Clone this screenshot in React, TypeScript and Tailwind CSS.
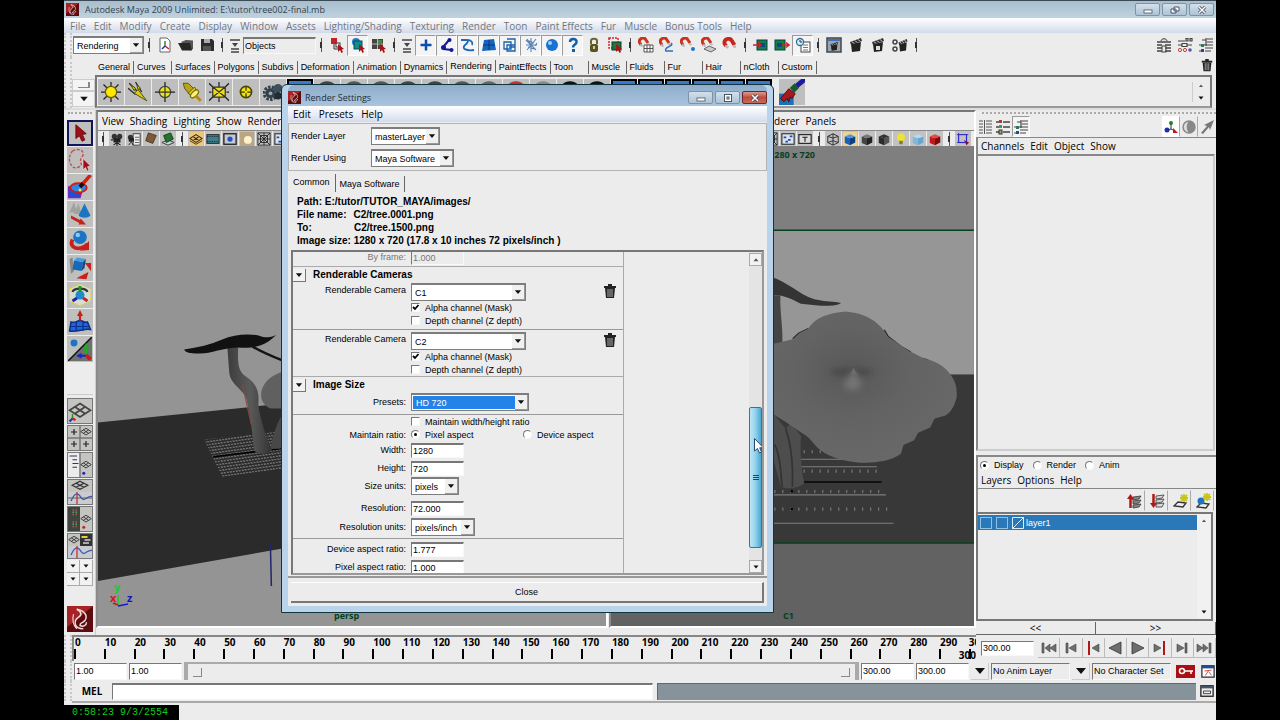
import type { ReactNode } from "react";
import clsx from "clsx";
import { twMerge } from "tailwind-merge";

/* ---------- icons, all on a 16x16 grid ---------- */

const magnet = (
  <>
    <path d="M3 8 L1.500 5.500 A3.500 3.500 0 0 1 8 3 L10 6" fill="none" stroke="#c8341c" strokeWidth="3" />
    <path d="M2 7.500 l2.500 2 M9 6.500 l2.500 1.500" stroke="#b8b8b8" strokeWidth="2" />
  </>
);

const clapper = (
  <>
    <path d="M3 7 L13 5 L12 14 L4 15 Z" fill="#222" />
    <path d="M2 5 L13 1 L14 4 L3 8 Z" fill="#333" />
    <path d="M4 4.500 l2 2 M7 3.500 l2 2 M10 2.300 l2 2" stroke="#ddd" strokeWidth="1" />
  </>
);

const cursorRed = <path d="M9 7 L9 15 L11 13 L12.500 16 L14 15 L12.700 12.500 L15 12 Z" fill="#a8121a" />;

const cube = (front: string, side: string, top: string) => (
  <>
    <path d="M2 5 L8 7 L8 15 L2 12.500 Z" fill={front} />
    <path d="M8 7 L14 5 L14 12 L8 15 Z" fill={side} />
    <path d="M2 5 L8 2.500 L14 5 L8 7 Z" fill={top} />
  </>
);

const diamonds = (color: string) => (
  <path
    d="M8 3 L15 7.500 L8 12 L1 7.500 Z M4.500 5.200 L11.500 9.800 M11.500 5.200 L4.500 9.800"
    fill="none"
    stroke={color}
    strokeWidth="1.200"
  />
);

const icons: Record<string, ReactNode> = {
  newScene: (
    <>
      <path d="M3 1 h7 l3 3 v11 h-10 z" fill="#fff" stroke="#666" />
      <path d="M8 9 v-5" stroke="#1a9a1a" strokeWidth="1.500" />
      <path d="M8 9 l-3 3" stroke="#1a2fd0" strokeWidth="1.500" />
      <path d="M8 9 l4 3" stroke="#d01a1a" strokeWidth="1.500" />
    </>
  ),
  open: (
    <>
      <path d="M3 5 L8 3 L15 3.500 V12 L12 13.500 Z" fill="#555" />
      <path d="M0 6 H12 L14 13.500 H4 Z" fill="#262626" />
    </>
  ),
  save: (
    <>
      <path d="M2 2 H13 L15 4 V14 H2 Z" fill="#2c2c2c" />
      <rect x="5" y="2" width="6" height="4" fill="#aaa" />
      <rect x="4" y="9" width="8" height="5" fill="#555" />
    </>
  ),
  filter: (
    <>
      <path d="M3 3 H13 M4 12 H12 M4 15 H12" stroke="#444" strokeWidth="1.300" />
      <path d="M5 6 H11 L8 10 Z" fill="#444" />
    </>
  ),
  hierarchy: (
    <>
      <rect x="2" y="1" width="6" height="6" fill="#c71f28" />
      <path d="M5 7 V12 H12 M8 8 H11" stroke="#333" fill="none" />
      <rect x="7" y="6" width="4" height="4" fill="#fff" stroke="#333" />
      {cursorRed}
    </>
  ),
  object: (
    <>
      <circle cx="6" cy="5" r="4" fill="#2578c8" />
      <rect x="4" y="4" width="8" height="8" fill="#0e8f86" stroke="#054c66" />
      {cursorRed}
    </>
  ),
  component: (
    <>
      <rect x="1" y="2" width="11" height="10" fill="#444" />
      <path d="M6.500 2 V12 M1 7 H12" stroke="#bbb" />
      <rect x="7" y="3" width="4" height="4" fill="#3d8f3d" />
      {cursorRed}
    </>
  ),
  plus: <path d="M8 2.500 V13.500 M2.500 8 H13.500" stroke="#0a4fae" strokeWidth="2.500" />,
  joint: (
    <>
      <path d="M10 3 L5 9 M4 12 L13 13" fill="none" stroke="#16169a" strokeWidth="2" />
      <circle cx="10.500" cy="3" r="2" fill="#16169a" />
      <circle cx="4.500" cy="10.500" r="2.500" fill="#16169a" />
      <circle cx="12.500" cy="13" r="2" fill="#16169a" />
    </>
  ),
  curve: <path d="M1 3 H6 C9 3 8 6 5 8 C1 12 7 14 14 13 M7 3 C12 3 13 6 12 8" fill="none" stroke="#1c68b8" strokeWidth="1.800" />,
  surface: (
    <>
      <path d="M3 3 L13 2 L15 13 L1 14 Z" fill="#1565c0" />
      <path d="M8 3 V13 M2 8 H14" stroke="#0a3870" />
    </>
  ),
  deform: (
    <path d="M2 5 H9 V12 H2 Z M5 8 H13 V14 H5 Z M5 2 H13 V10 H7" fill="none" stroke="#1a62ac" strokeWidth="1.300" />
  ),
  particles: (
    <path d="M3 3 L13 13 M13 2 L4 13 M8 1 V15 M3 8 H14 M4 2 L7 6 M12 9 L14 6 M6 4 L11 6 M5 10 L11 12" stroke="#3f6fa8" strokeWidth="1.100" opacity=".85" />
  ),
  sphere: (
    <>
      <circle cx="8" cy="8" r="6" fill="#1673d1" />
      <circle cx="6" cy="6" r="2" fill="#9fd0ff" />
    </>
  ),
  question: (
    <>
      <path d="M5 5 C5 1 12 1 11.500 5 C11.500 8 8 7 8 10.500" fill="none" stroke="#0d5fa6" strokeWidth="2.500" />
      <rect x="7" y="12" width="3" height="3" fill="#0d5fa6" />
    </>
  ),
  lock: (
    <>
      <path d="M5 7 V4 C5 1 11 1 11 4 V7" fill="none" stroke="#6b6437" strokeWidth="2" />
      <rect x="4" y="7" width="8" height="8" rx="2" fill="#5a5320" />
      <rect x="7" y="9" width="2" height="3" fill="#d8cf8a" />
    </>
  ),
  highlight: (
    <>
      <rect x="2" y="1" width="9" height="10" fill="none" stroke="#d8202c" strokeWidth="1.500" strokeDasharray="2 1" />
      <rect x="5" y="5" width="9" height="8" fill="#1a7a3c" stroke="#043a2a" />
      {cursorRed}
    </>
  ),
  magnetGrid: (
    <>
      {magnet}
      <path d="M6 8 H15 V15 H6 Z M9 8 V15 M12 8 V15 M6 11.500 H15" fill="#fff" stroke="#555" />
    </>
  ),
  magnetCurve: (
    <>
      {magnet}
      <path d="M12 6 C16 9 4 10 7 14 L14 14" fill="none" stroke="#2b6fc0" strokeWidth="1.500" />
    </>
  ),
  magnetPoint: (
    <>
      {magnet}
      <circle cx="13" cy="12" r="2" fill="#2176cc" />
    </>
  ),
  magnetPlane: (
    <>
      {magnet}
      <path d="M3 12 L8 9 L15 12 L10 15 Z" fill="#ccc" stroke="#666" />
    </>
  ),
  magnetLive: (
    <>
      <path d="M4 9 L2.500 6.500 A4 4 0 0 1 10 4 L12.500 8" fill="none" stroke="#c8251a" strokeWidth="3.800" />
      <path d="M3 9 l3.500 1.500 M11 9 l3 1" stroke="#bbb" strokeWidth="2.500" />
    </>
  ),
  input: (
    <>
      <rect x="4" y="3" width="10" height="10" fill="#16803c" stroke="#0a3d5a" />
      <rect x="7" y="6" width="5" height="4" fill="#0c4a7d" />
      <path d="M0 8 H7 M5 5.500 L8 8 L5 10.500" stroke="#d32020" fill="none" strokeWidth="1.500" />
    </>
  ),
  output: (
    <>
      <rect x="1" y="3" width="10" height="10" fill="#16803c" stroke="#0a3d5a" />
      <rect x="3" y="6" width="5" height="4" fill="#0c4a7d" />
      <path d="M8 8 H15 M12 5.500 L15 8 L12 10.500" stroke="#d32020" fill="none" strokeWidth="1.500" />
    </>
  ),
  history: (
    <>
      <rect x="6" y="5" width="9" height="10" fill="#fff" stroke="#444" />
      <path d="M8 8 H13 M8 10.500 H13 M8 13 H13" stroke="#777" />
      <circle cx="5" cy="5" r="3.500" fill="#d8ecf8" stroke="#2b6f9c" strokeWidth="1.300" />
      <path d="M5 3 V5 H7" stroke="#234" fill="none" />
    </>
  ),
  renderView: (
    <>
      <rect x="1" y="1" width="14" height="14" fill="#9aa6b4" stroke="#444" strokeWidth="1.500" />
      <rect x="2" y="2" width="12" height="2" fill="#3c74b8" />
      <g transform="translate(3 4) scale(.65)">{clapper}</g>
    </>
  ),
  clapper,
  ipr: (
    <>
      {clapper}
      <path d="M6 9 h4 v4 h-4 z" fill="#ddd" />
    </>
  ),
  renderSettings: (
    <>
      <circle cx="3" cy="5" r="2" fill="none" stroke="#444" strokeWidth="1.500" />
      <circle cx="3" cy="12" r="2" fill="none" stroke="#444" strokeWidth="1.500" />
      <g transform="translate(5 1) scale(.75 .9)">{clapper}</g>
    </>
  ),
  attr: (
    <>
      <path d="M1 5 H15 M1 8 H6 M9 8 H15 M1 11 H6 M9 11 H15 M1 14 H6 M9 14 H15" stroke="#444" strokeWidth="1.300" />
      <path d="M5 4 C5 1 11 1 11 4" fill="#ddd" stroke="#444" />
      <rect x="6" y="9" width="4" height="6" fill="none" stroke="#444" />
    </>
  ),
  toolSettings: (
    <>
      <path d="M1 4 H8 M1 8 H5 M9 1.500 H11 V4 H9 Z M13 1.500 H15 V4 H13 Z M5 6.500 H10 V9.500 H5 Z M10 8 H15" stroke="#444" fill="none" strokeWidth="1.200" />
      <circle cx="3" cy="13" r="1.600" fill="none" stroke="#b44" />
      <circle cx="8" cy="13" r="1.600" fill="none" stroke="#b44" />
      <circle cx="13" cy="13" r="1.800" fill="#55a" />
    </>
  ),
  channelBox: (
    <>
      <path d="M8 1 V9 M4 3 H8 M9 2 H15 M9 5 H15 M1 8 H15 M7 11 H15 M1 14 H4 M7 14 H13" stroke="#444" strokeWidth="1.200" fill="none" />
      <rect x="3" y="7" width="3" height="3" fill="#2a7a5a" />
      <rect x="3" y="12" width="3" height="3" fill="#2a4a80" />
    </>
  ),
  listRows: (
    <path d="M2 2 H6 M9 2 H15 M2 5 H6 M9 5 H15 M2 8 H6 M9 8 H15 M2 11 H6 M9 11 H15 M2 14 H6 M9 14 H15 M7.500 1 V15" stroke="#555" fill="none" />
  ),
  layersRows: (
    <>
      <path d="M1 3 H4 M8 3 H15 M1 8 H4 M8 8 H15 M1 13 H4 M8 13 H15" stroke="#444" strokeWidth="1.300" />
      <rect x="4" y="1" width="3" height="3" fill="#b33" />
      <rect x="4" y="6" width="3" height="3" fill="#397" />
      <rect x="4" y="11" width="3" height="4" fill="#aa4" stroke="#333" />
    </>
  ),
  trash: (
    <>
      <path d="M3 5 H13 L12 15 H4 Z" fill="#222" />
      <path d="M6 6 V14 M8 6 V14 M10 6 V14" stroke="#bbb" strokeWidth=".9" />
      <path d="M2 4 H14 M6 2 H10" stroke="#222" strokeWidth="2" />
    </>
  ),
  ambient: (
    <>
      <path d="M8 0 V16 M0 8 H16 M2 2 L14 14 M14 2 L2 14" stroke="#222" />
      <circle cx="8" cy="8" r="4.500" fill="#ffe600" stroke="#665c00" />
    </>
  ),
  directional: (
    <>
      <path d="M1 1 L8 8 M6 0 L11 8 M0 5 L6 10" stroke="#222" />
      <path d="M2 2 L6 5 L5 7 Z M7 2 L10 5 L8 6 Z M8 6 L15 15 L5 9 Z" fill="#d9cf10" stroke="#444000" strokeWidth=".7" />
    </>
  ),
  point: (
    <>
      <path d="M8 0 V16 M0 8 H16" stroke="#222" />
      <circle cx="8" cy="8" r="4.500" fill="#ece21a" stroke="#444" />
      <path d="M8 3 V13 M3 8 H13" stroke="#333" />
    </>
  ),
  spot: (
    <>
      <path d="M1 1 L5 1 L10 6 L6 10 L2 5 Z" fill="#b8a41c" stroke="#554a00" strokeWidth=".7" />
      <path d="M5 9 L10 4 L12 8 L9 12 Z" fill="#e6cf1c" stroke="#554a00" strokeWidth=".7" />
      <ellipse cx="10" cy="9.500" rx="4" ry="2" transform="rotate(-45 10 9.500)" fill="#fff27a" stroke="#7a6b00" />
      <path d="M11 11 L15 15" stroke="#b8860b" strokeWidth="2.200" />
    </>
  ),
  area: (
    <>
      <path d="M0 1 L3 4 M16 1 L13 4 M0 15 L3 12 M16 15 L13 12 M8 0 V4 M8 12 V16 M0 8 H2 M14 8 H16" stroke="#222" />
      <path d="M3 4 H13 V12 H3 Z M3 4 L13 12 M13 4 L3 12" fill="#f0e010" stroke="#333" />
    </>
  ),
  volume: (
    <>
      <circle cx="8" cy="8" r="4.500" fill="#f2e400" stroke="#4a4400" strokeWidth="1.300" />
      <path d="M8 4 V12 M4 8 H12" stroke="#333" strokeDasharray="3 2" />
    </>
  ),
  gears: (
    <>
      <circle cx="6" cy="9" r="5" fill="none" stroke="#34424c" strokeWidth="2.500" strokeDasharray="2 1" />
      <circle cx="6" cy="9" r="4" fill="#34424c" />
      <circle cx="12" cy="5" r="3.500" fill="#3b4f5c" />
      <circle cx="12" cy="11" r="3" fill="#222c33" />
      <circle cx="6" cy="9" r="1.500" fill="#9ab" />
    </>
  ),
  brush: (
    <>
      <rect x="0" y="9" width="9" height="7" fill="#1f6fb5" />
      <path d="M16 0 L10 5" stroke="#1d1a9c" strokeWidth="3" />
      <path d="M11 4 L8 7" stroke="#1c5a2e" strokeWidth="4" />
      <path d="M6 6 L10 9 L8 12 L7 11 L6 14 L5 12 L3 14 L1 12 Z" fill="#a81820" stroke="#400" strokeWidth=".5" />
    </>
  ),
  select: <path d="M5 2 L5 12 L7.500 10 L9.500 14 L11.500 13 L9.700 9 L12.500 8.500 Z" fill="#a30d18" stroke="#5c0007" strokeWidth=".6" />,
  lasso: (
    <>
      <path d="M3 2 C6 0 11 1 10 5 C8 7 8 9 9 11 C7 14 3 14 2 11 C0 8 1 4 3 2 Z" fill="none" stroke="#cc4a50" strokeWidth=".9" strokeDasharray="2 1" />
      <path d="M10 7 V14.500 L11.700 13 L12.700 15.500 L14 14.800 L13 12.500 L15 12 Z" fill="#a30d18" stroke="#eee" strokeWidth=".4" />
    </>
  ),
  paintSelect: (
    <>
      <path d="M0 8 H10 L8 15 H0 Z" fill="#1e4fd0" stroke="#8822bb" />
      <ellipse cx="7" cy="8.500" rx="5.500" ry="3" fill="#2f86e0" stroke="#d61818" strokeWidth="1.200" />
      <path d="M8 8 L15 0" stroke="#cf2013" strokeWidth="2.300" />
      <path d="M8 8 L10 5.500" stroke="#111" strokeWidth="2.500" />
      <circle cx="8" cy="10" r="1" fill="#ffe040" />
    </>
  ),
  move: (
    <>
      <path d="M1 7 L4 0 L6 7 Z M4 8 L7 1 L9 8 Z" fill="#a0a29e" />
      <path d="M7 9 L11 1 L15 9 C13 11 9 11 7 9 Z" fill="#1b74c4" />
      <path d="M2 9 L8 12 L8.500 11 L12 15 L7 15 L7.500 14 L2 11 Z" fill="#c9221c" />
    </>
  ),
  rotate: (
    <>
      <path d="M3 7 C0 13 8 15 13 10" fill="none" stroke="#c8201c" strokeWidth="2.500" />
      <path d="M8 14.500 L14 14 L14 8 Z" fill="#c8201c" />
      <circle cx="8" cy="5.500" r="4.500" fill="#1b74c4" />
      <circle cx="6.500" cy="4" r="1.500" fill="#8cc6f5" />
    </>
  ),
  scale: (
    <>
      <path d="M1 2 L3 1 L4 10 L2 12 Z" fill="#888" />
      <path d="M4 3 L10 4 L9 10 L3 9 Z" fill="#1668b8" />
      <path d="M4 3 L6 1 L12 2 L10 4 Z" fill="#4c9ae0" />
      <path d="M10 4 L12 2 L11 8 L9 10 Z" fill="#0f4a88" />
      <path d="M12 5 L15 9 L15 5 Z M7 14.500 L13 11.500 L12 15 Z" fill="#d11d1d" stroke="#d11d1d" strokeWidth=".8" />
    </>
  ),
  manipulator: (
    <>
      <path d="M1 4 L8 1 L15 4 V12 L8 15 L1 12 Z" fill="#d8dcd8" stroke="#e6dc20" strokeDasharray="1 2" />
      <path d="M3 6 C4 3 12 3 13 6" fill="none" stroke="#333" strokeWidth="1.500" />
      <circle cx="8" cy="8" r="3" fill="#1f8bc8" />
      <path d="M8 2 V6" stroke="#1a9a1a" strokeWidth="2" />
      <path d="M6 10 L3 12" stroke="#22a" strokeWidth="2" />
      <path d="M10 10 L13 12" stroke="#c22" strokeWidth="2" />
    </>
  ),
  soft: (
    <>
      <path d="M2 8 C5 9 6 7 8 7 C10 7 11 9 13 8 L15 13 C11 12 6 15 1 14 Z" fill="#1f66d6" stroke="#0a2f8c" />
      <path d="M5.500 8 V14 M10 8 V14 M1.500 11 H14" stroke="#0a2f8c" strokeWidth=".8" />
      <path d="M8 7 V3" stroke="#c8201c" strokeWidth="1.500" />
      <path d="M6 4 L8 0 L10 4 Z" fill="#c8201c" />
    </>
  ),
  lastTool: (
    <>
      <path d="M16 0 V16 H0 Z" fill="#6f716e" />
      <path d="M0 16 L16 0" stroke="#111" strokeWidth="1" />
      <circle cx="4" cy="4" r="2.300" fill="#1d74c6" />
      <path d="M12 12 V7" stroke="#18b018" strokeWidth="1.500" />
      <path d="M10 8 L12 4 L14 8 Z" fill="#18b018" />
      <path d="M12 12.500 H8" stroke="#1626c8" strokeWidth="1.500" />
      <path d="M9 10.500 V14.500 L5.500 12.500 Z" fill="#1626c8" />
      <path d="M12 12 L15 15" stroke="#d01818" strokeWidth="2.500" />
    </>
  ),
  persp: (
    <>
      {diamonds("#444")}
      <path d="M3 13 V10" stroke="#1a9a1a" />
      <path d="M3 13 L1 15" stroke="#1a3ad0" strokeWidth="1.500" />
      <path d="M3 13 L5 14" stroke="#d01a1a" strokeWidth="1.500" />
    </>
  ),
  fourView: (
    <>
      <path d="M8 0 V16 M0 8 H16" stroke="#777" />
      <path d="M4 2 V6 M2 4 H6 M4 10 V14 M2 12 H6 M12 10 V14 M10 12 H14" stroke="#222" strokeWidth=".8" />
      <g transform="translate(8 0) scale(.5)">{diamonds("#333")}</g>
    </>
  ),
  outliner: (
    <>
      <rect x="0" y="0" width="8" height="16" fill="#ececec" />
      <path d="M1 2 H6 M3 4.500 H6 M3 7 H7 M3 9.500 H6" stroke="#336" strokeWidth=".8" />
      <path d="M8 0 V16" stroke="#777" />
      <g transform="translate(8 4) scale(.5)">{diamonds("#333")}</g>
      <circle cx="10.500" cy="13.500" r="1" fill="#22c" />
    </>
  ),
  graph: (
    <>
      <g transform="translate(2 -1) scale(.75 .6)">{diamonds("#333")}</g>
      <rect x="0" y="8" width="16" height="8" fill="#c9cdd2" />
      <path d="M2 14 C5 7 7 9 9 12 C11 15 13 10 16 11" fill="none" stroke="#3a5cb0" strokeWidth=".9" />
      <path d="M6 8 V16" stroke="#d02020" strokeWidth=".8" />
      <path d="M0 12 H16" stroke="#555" strokeWidth=".6" />
    </>
  ),
  hypershade: (
    <>
      <rect x="0" y="0" width="8" height="16" fill="#3e4440" />
      <path d="M3 2 H7 M3 5 H7 M3 10 H7 M3 13 H7" stroke="#b25a4a" strokeDasharray="1 1" />
      <path d="M3 3.500 H7 M3 11.500 H7" stroke="#4fae5c" strokeDasharray="1 1" />
      <g transform="translate(8 4) scale(.5)">{diamonds("#333")}</g>
      <circle cx="10.500" cy="13.500" r="1" fill="#c22" />
    </>
  ),
  perspGraph: (
    <>
      <g transform="translate(0 0) scale(.5)">{diamonds("#333")}</g>
      <rect x="8" y="0" width="8" height="8" fill="#333" />
      <path d="M9 2 H13" stroke="#e0d040" strokeWidth="1.300" />
      <path d="M11 4 H15 M10 6 H14" stroke="#aaa" strokeWidth="1.300" />
      <rect x="0" y="8" width="16" height="8" fill="#c9cdd2" />
      <path d="M2 14 C5 7 7 9 9 12 C11 15 13 10 16 11" fill="none" stroke="#3a5cb0" strokeWidth=".9" />
      <path d="M6 8 V16" stroke="#d02020" strokeWidth=".8" />
    </>
  ),
  logo: (
    <>
      <rect width="16" height="16" fill="#5d0b0e" />
      <path d="M0 0 H16 L0 13 Z" fill="#a82326" />
      <path d="M10 14 C4 14 4 9 7 7 C10 5 8 3 6 2 C11 3 13 6 11 9 C9 11 8 10 8 12 C10 13 12 12 12 10" fill="none" stroke="#f0dcdc" strokeWidth=".9" />
      <path d="M4 5 C3 9 4 12 6 14" fill="none" stroke="#f0dcdc" strokeWidth=".7" />
    </>
  ),
  camera: (
    <>
      <circle cx="5" cy="5" r="3" fill="#333" />
      <circle cx="11" cy="5" r="3" fill="#333" />
      <rect x="4" y="7" width="8" height="5" fill="#222" />
      <path d="M8 12 V16 M8 12 L4 15 M8 12 L12 15 M1 9 H4" stroke="#222" strokeWidth="1.300" />
    </>
  ),
  cameraAttr: (
    <>
      <rect x="7" y="2" width="8" height="13" fill="#eee" stroke="#333" />
      <path d="M9 6 H14 M9 9 H14 M9 12 H14" stroke="#555" />
      <circle cx="4" cy="6" r="3" fill="#333" />
      <rect x="2" y="7" width="6" height="4" fill="#222" />
      <path d="M5 11 L2 15 M5 11 L7 15" stroke="#222" />
    </>
  ),
  bookmark: <path d="M5 1 L14 4 L10 13 L2 10 Z" fill="#7b5a3c" stroke="#4b3420" />,
  imagePlane: (
    <>
      <path d="M1 12 L8 9 L15 12 L8 15 Z" fill="#ccd" stroke="#333" />
      <path d="M3 4 L11 1 L14 8 L6 12 Z" fill="#23742b" stroke="#0d3d12" />
    </>
  ),
  grid: (
    <>
      <rect width="16" height="16" fill="#ecc77c" />
      {diamonds("#3d2c08")}
      <path d="M1 10 L8 14 L15 10" fill="none" stroke="#3d2c08" />
    </>
  ),
  filmGate: (
    <>
      <rect x="1" y="3" width="14" height="10" fill="#3f7f8c" stroke="#222" />
      <path d="M1 5 H15 M1 11 H15" stroke="#111" strokeDasharray="1 1" />
    </>
  ),
  resGate: (
    <>
      <rect x="1" y="2" width="14" height="12" fill="#c4c8d0" stroke="#222" strokeWidth="1.500" />
      <circle cx="8" cy="8" r="3" fill="#1f57c0" />
    </>
  ),
  gateMask: (
    <>
      <rect width="16" height="16" fill="#bba684" />
      <circle cx="9" cy="9" r="4.500" fill="#fff1c8" />
    </>
  ),
  fieldChart: (
    <path d="M1 1 H15 V15 H1 Z M4 4 H12 V12 H4 Z M1 1 L15 15 M15 1 L1 15 M8 1 V15 M1 8 H15" fill="none" stroke="#222" />
  ),
  safeAction: (
    <>
      <rect x="1" y="2" width="14" height="12" fill="#dde4ee" stroke="#333" strokeWidth="1.300" />
      <path d="M3 6 h3 M8 9 h3 M10 5 h3 M5 11 h3" stroke="#1d4fb4" strokeWidth="2" />
    </>
  ),
  safeTitle: (
    <>
      <rect x="1" y="3" width="14" height="10" fill="#ddd" stroke="#222" strokeWidth="1.300" />
      <path d="M5 6 H11 M8 6 V11" stroke="#222" strokeWidth="1.300" />
    </>
  ),
  wire: <path d="M2 5 L8 2 L14 5 V12 L8 15 L2 12 Z M2 5 L8 7 L14 5 M8 7 V15 M8 2 V7 M2 12 L8 10 L14 12" fill="none" stroke="#222" />,
  shaded: (
    <>
      <rect width="16" height="16" fill="#f0d492" />
      {cube("#1a5fb8", "#0e3f80", "#4f94e0")}
    </>
  ),
  flat: cube("#444", "#222", "#777"),
  checker: cube("#2c2c2c", "#555", "#333"),
  bulb: (
    <>
      <circle cx="8" cy="6" r="4.500" fill="#ece334" />
      <path d="M6 10 H10 V14 H6 Z" fill="#8a7c20" />
    </>
  ),
  xray: cube("#7fb8dc", "#6aa6cc", "#b4dcf0"),
  redCube: cube("#c0181c", "#7a0c10", "#e04a40"),
  isolate: (
    <>
      <rect x="3" y="3" width="9" height="9" fill="none" stroke="#2a2ad0" strokeWidth="1.300" />
      <path d="M1 3 H3 M12 3 H14 M3 1 V3 M12 12 V14 M1 12 H3" stroke="#2a2ad0" />
      <path d="M9 9 L15 12 L12 15 Z" fill="#8d1030" />
    </>
  ),
  axes: (
    <>
      <circle cx="8" cy="4" r="2" fill="#1a8a1a" />
      <circle cx="4" cy="11" r="2.500" fill="#1a30b0" />
      <path d="M8 5 V10 L5 11 M8 10 L12 12" stroke="#333" fill="none" />
      <path d="M10 9 L15 14 L10 14 Z" fill="#c01818" />
    </>
  ),
  halfMoon: (
    <>
      <circle cx="8" cy="8" r="6" fill="#ddd" stroke="#888" strokeWidth="1.500" />
      <path d="M8 2 A6 6 0 0 1 8 14 C5 11 5 5 8 2" fill="#888" />
    </>
  ),
  arrowUpRight: <path d="M2 14 L8 7 L5 6 L15 1 L11 11 L10 8 L4 15 Z" fill="#777" />,
  layerUp: (
    <>
      <path d="M6 4 L14 3 L12 6 L5 7 Z M6 8 L14 7 L12 10 L6 11 Z M6 12 L14 11 L12 14 L6 15 Z" fill="#888" stroke="#333" strokeWidth=".8" />
      <path d="M3.500 15 V6" stroke="#b01818" strokeWidth="2.500" />
      <path d="M0 6 L3.500 1 L7 6 Z" fill="#b01818" />
    </>
  ),
  layerDown: (
    <>
      <path d="M6 3 L14 2 L12 5 L6 6 Z M6 7 L14 6 L12 9 L6 10 Z M6 11 L14 10 L12 14 L6 14 Z" fill="#ddd" stroke="#333" strokeWidth=".8" />
      <path d="M3.500 1 V10" stroke="#b01818" strokeWidth="2.500" />
      <path d="M0 10 L3.500 15 L7 10 Z" fill="#b01818" />
    </>
  ),
  layerNew: (
    <>
      <path d="M1 13 L5 9 L13 10 L10 14 Z" fill="#eee" stroke="#333" strokeWidth="1.300" />
      <path d="M11 1 V9 M7 5 H15 M8 2 L14 8 M14 2 L8 8" stroke="#c9c41c" strokeWidth="1.800" />
    </>
  ),
  layerNewSel: (
    <>
      <path d="M1 14 L5 10 L13 11 L10 15 Z" fill="#eee" stroke="#333" strokeWidth="1.300" />
      <circle cx="5" cy="8" r="3.500" fill="#1d74c6" />
      <path d="M11 0 V8 M7 4 H15 M8 1 L14 7 M14 1 L8 7" stroke="#c9c41c" strokeWidth="1.800" />
    </>
  ),
  toStart: <path d="M1 3 H3 V13 H1 Z M9 4 V12 L4 8 Z M15 4 V12 L9 8 Z" fill="#6d706c" stroke="#444" strokeWidth=".6" />,
  stepBack: <path d="M3 3 H5 V13 H3 Z M13 4 V12 L6 8 Z" fill="#6d706c" stroke="#444" strokeWidth=".6" />,
  keyBack: (
    <>
      <path d="M14 4 V12 L7 8 Z" fill="#6d706c" stroke="#444" strokeWidth=".6" />
      <rect x="3" y="1" width="2" height="14" fill="#b01818" />
    </>
  ),
  playBack: <path d="M14 2 V14 L2 8 Z" fill="#6d706c" stroke="#333" strokeWidth=".8" />,
  play: <path d="M2 2 V14 L14 8 Z" fill="#6d706c" stroke="#333" strokeWidth=".8" />,
  keyForward: (
    <>
      <path d="M2 4 V12 L9 8 Z" fill="#6d706c" stroke="#444" strokeWidth=".6" />
      <rect x="11" y="1" width="2" height="14" fill="#b01818" />
    </>
  ),
  stepForward: <path d="M11 3 H13 V13 H11 Z M3 4 V12 L10 8 Z" fill="#6d706c" stroke="#444" strokeWidth=".6" />,
  toEnd: <path d="M13 3 H15 V13 H13 Z M7 4 V12 L12 8 Z M1 4 V12 L7 8 Z" fill="#6d706c" stroke="#444" strokeWidth=".6" />,
  down: <path d="M3 5 H13 L8 11 Z" fill="#111" />,
  up: <path d="M4 10 L8 5 L12 10 Z" fill="#555" />,
  key: (
    <>
      <circle cx="4" cy="8" r="2.500" fill="none" stroke="#fff" strokeWidth="1.500" />
      <path d="M6 8 H15 M13 8 V11" stroke="#fff" strokeWidth="1.500" />
    </>
  ),
  prefs: (
    <>
      <rect x="1" y="2" width="14" height="13" fill="#fff" stroke="#333" strokeWidth="1.500" />
      <rect x="1" y="2" width="14" height="3" fill="#1d4f8c" />
      <path d="M4 8 L12 7 M9 7 L5 13 M9 9 L12 13" stroke="#c33" />
    </>
  ),
  script: (
    <>
      <rect x="1" y="2" width="14" height="12" fill="#eee" stroke="#222" strokeWidth="1.500" />
      <rect x="1" y="2" width="14" height="3" fill="#456" />
      <path d="M4 8 H12 V11 H4 Z" fill="none" stroke="#333" />
    </>
  ),
};

function Icon({ name, className = "size-4" }: { name: string; className?: string }) {
  return (
    <svg viewBox="0 0 16 16" className={clsx("shrink-0", className)} aria-hidden>
      {icons[name]}
    </svg>
  );
}

function ToolButton({ name, pressed, className }: { name: string; pressed?: boolean; className?: string }) {
  return (
    <button
      type="button"
      aria-label={name}
      className={twMerge(
        "flex h-[21px] w-[21px] shrink-0 items-center justify-center border",
        pressed ? "border-t-[#9a9a9a] border-l-[#9a9a9a] border-r-white border-b-white bg-[#f4f4f4]" : "border-transparent",
        className,
      )}
    >
      <Icon name={name} />
    </button>
  );
}

function Divider() {
  return (
    <span className="flex w-[10px] shrink-0 flex-col items-center justify-center">
      <span className="h-1 w-px bg-[#555]" />
      <span className="h-[6px] w-[2px] bg-[#333]" />
      <span className="h-1 w-px bg-[#555]" />
    </span>
  );
}

function Handle() {
  return <div className="w-2 shrink-0 self-stretch border-x-2 border-dotted border-[#c8c8c8]" />;
}

/* ---------- form pieces ---------- */

const menuFont = "font-['Open_Sans',sans-serif] text-[10px]";
const inset = "border border-t-[#777] border-l-[#777] border-r-[#f8f8f8] border-b-[#f8f8f8]";

type ComboProps = { id: string; label?: string; value: string; className?: string; highlight?: boolean };

function Combo({ id, label, value, className, highlight }: ComboProps) {
  return (
    <span className={clsx("relative flex h-[18px] shrink-0 border border-t-2 border-[#7d7d7d] bg-white", className)}>
      <select
        id={id}
        aria-label={label}
        className={clsx(
          "h-full w-full appearance-none pl-[3px] outline-none",
          highlight ? "border border-white bg-[#2383e8] text-white" : "bg-white text-black",
        )}
      >
        <option>{value}</option>
      </select>
      <span className="pointer-events-none absolute inset-y-0 right-0 flex w-[13px] items-center justify-center border-r border-b border-[#999] bg-[#f0f0f0]">
        <Icon name="down" className="size-[10px]" />
      </span>
    </span>
  );
}

function Check({ label, checked }: { label: string; checked?: boolean }) {
  return (
    <label className="flex h-[13px] items-center gap-[5px]">
      <span className="grid place-items-center">
        <input
          type="checkbox"
          defaultChecked={checked}
          className={clsx("peer col-start-1 row-start-1 size-[9px] appearance-none bg-white", inset)}
        />
        <svg viewBox="0 0 9 9" className="pointer-events-none col-start-1 row-start-1 hidden size-[9px] peer-checked:block">
          <path d="M2 4 L4 6 L7.500 2" fill="none" stroke="#000" strokeWidth="1.800" />
        </svg>
      </span>
      {label}
    </label>
  );
}

function Radio({ name, label, checked, className }: { name: string; label: string; checked?: boolean; className?: string }) {
  return (
    <label className={clsx("flex h-[13px] items-center gap-[5px]", className)}>
      <span className="grid place-items-center">
        <input
          type="radio"
          name={name}
          defaultChecked={checked}
          className={clsx("peer col-start-1 row-start-1 size-[9px] appearance-none rounded-full bg-white", inset)}
        />
        <span className="pointer-events-none col-start-1 row-start-1 hidden size-[3px] rounded-full bg-black peer-checked:block" />
      </span>
      {label}
    </label>
  );
}

function Row({ id, label, children }: { id?: string; label?: string; children: ReactNode }) {
  return (
    <div className="flex h-[18px] items-center gap-[5px]">
      <label htmlFor={id} className="w-[113px] shrink-0 text-right whitespace-nowrap">
        {label}
      </label>
      {children}
    </div>
  );
}

function NumberField({ id, value, disabled }: { id: string; value: string; disabled?: boolean }) {
  return (
    <input
      id={id}
      defaultValue={value}
      disabled={disabled}
      className={clsx("h-[15px] w-[53px] border-t-2 pl-px outline-none", inset, disabled ? "bg-[#ececec] text-[#777]" : "bg-white")}
    />
  );
}

function SectionHeader({ title }: { title: string }) {
  return (
    <div className="flex h-4 items-center gap-[7px]">
      <button type="button" aria-label={title} className="flex size-[13px] items-center justify-center border-r border-b border-[#777] bg-[#f2f2f2]">
        <Icon name="down" className="size-[10px]" />
      </button>
      <h3 className="text-[10px] font-bold">{title}</h3>
    </div>
  );
}

function CameraBlock({ id, name }: { id: string; name: string }) {
  return (
    <div>
      <div className="flex items-center gap-[5px]">
        <label htmlFor={id} className="w-[113px] shrink-0 pb-[5px] text-right">
          Renderable Camera
        </label>
        <Combo id={id} value={name} className="w-[115px]" />
        <button type="button" aria-label="Remove" className="mr-[5px] ml-auto flex pb-[2px]">
          <Icon name="trash" />
        </button>
      </div>
      <div className="pl-[118px]">
        <Check label="Alpha channel (Mask)" checked />
        <Check label="Depth channel (Z depth)" />
      </div>
    </div>
  );
}

/* ---------- data ---------- */

const mainMenu = [
  "File", "Edit", "Modify", "Create", "Display", "Window", "Assets", "Lighting/Shading", "Texturing",
  "Render", "Toon", "Paint Effects", "Fur", "Muscle", "Bonus Tools", "Help",
];

const shelfTabs = [
  "General", "Curves", "Surfaces", "Polygons", "Subdivs", "Deformation", "Animation", "Dynamics", "Rendering",
  "PaintEffects", "Toon", "Muscle", "Fluids", "Fur", "Hair", "nCloth", "Custom",
];

const masks = ["plus", "joint", "curve", "surface", "deform", "particles", "sphere", "question"];
const snaps = ["magnetGrid", "magnetCurve", "magnetPoint", "magnetPlane", "magnetLive"];
const lights = ["ambient", "directional", "point", "spot", "area", "volume", "gears"];
const shelfBalls = ["#444", "#555", "#555", "#444", "#444", "#555", "#666", "#b33", "#888", "#111", "#111"];
const toolbox = ["select", "lasso", "paintSelect", "move", "rotate", "scale", "manipulator", "soft", "lastTool"];
const layouts = ["persp", "fourView", "outliner", "graph", "hypershade", "perspGraph"];
const playback = ["toStart", "stepBack", "keyBack", "playBack", "play", "keyForward", "stepForward", "toEnd"];
const ticks = Array.from({ length: 30 }, (_, i) => i * 10);

/* ---------- viewports ---------- */

const viewTools = ["camera", "cameraAttr", "bookmark", "imagePlane"];
const gateTools = ["grid", "filmGate", "resGate", "gateMask", "fieldChart", "safeAction", "safeTitle"];
const shadeTools = ["wire", "shaded", "flat", "checker", "bulb", "xray", "redCube"];

function PanelTools({ names }: { names: string[] }) {
  return (
    <>
      {names.map((name) => (
        <button key={name} type="button" aria-label={name} className="flex h-[15px] w-4 shrink-0 items-center justify-center bg-[#c2c2c2]">
          <Icon name={name} className="size-[14px]" />
        </button>
      ))}
    </>
  );
}

function Viewport({ end, className, children }: { end?: boolean; className: string; children: ReactNode }) {
  return (
    <section className={clsx("flex min-w-0 flex-col border-2 border-t-[#777] border-r-white border-b-white border-l-[#8a8a8a] bg-[#ececec]", className)}>
      <nav className={clsx("flex h-[18px] shrink-0 items-center gap-[6px] px-1", menuFont, end && "w-[229px] justify-end")}>
        {["View", "Shading", "Lighting", "Show", "Renderer", "Panels"].map((item) => (
          <a key={item} href="#">{item}</a>
        ))}
      </nav>
      <div className={clsx("flex h-4 shrink-0 items-center gap-px overflow-hidden border-t border-[#888]", end && "justify-end pr-[3px]")}>
        <Divider />
        <PanelTools names={viewTools} />
        <Divider />
        <PanelTools names={gateTools} />
        <Divider />
        <PanelTools names={shadeTools} />
        <Divider />
        <PanelTools names={["isolate"]} />
      </div>
      <div className="relative min-h-0 flex-1">{children}</div>
    </section>
  );
}

function PerspScene() {
  return (
    <svg viewBox="0 0 507 479" preserveAspectRatio="xMinYMin slice" className="absolute inset-0 h-full w-full bg-[#949494]">
      <defs>
        <linearGradient id="trunk" x1="0" x2="1">
          <stop offset="0" stopColor="#3c3c3c" />
          <stop offset=".5" stopColor="#5a5a5a" />
          <stop offset="1" stopColor="#333" />
        </linearGradient>
        <pattern id="dots" width="3" height="3" patternUnits="userSpaceOnUse" patternTransform="rotate(-8) skewX(20)">
          <rect width="2" height="1" y="1" fill="#909090" />
        </pattern>
      </defs>
      <path d="M0 276 L507 224 V345 L0 434 Z" fill="#2b2b2b" />
      <path d="M106 293 L200 283 V320 L124 330 Z" fill="url(#dots)" />
      <path d="M115 310 L200 300" stroke="#000" strokeWidth="1.500" />
      <path d="M163 245 C168 228 182 226 200 220 V262 L172 262 C164 258 162 252 163 245 Z" fill="#606060" />
      <path d="M200 258 C184 262 178 274 172 302 H182 C184 290 186 280 200 272 Z" fill="#484848" />
      <path d="M129 200 H140 C139 218 140 226 149 231 C159 238 161 246 160 258 C162 275 168 290 174 304 C168 308 160 308 156 304 C154 285 152 270 148 252 C146 244 132 238 131 226 Z" fill="url(#trunk)" />
      <path d="M144 238 L153 278" stroke="#8a4a3a" />
      <path d="M86 203 C100 201 112 198 124 193 C135 188 150 187 160 189 C168 192 174 191 178 188 C170 197 158 203 140 201 C125 201 110 208 100 207 C92 207 87 206 86 203 Z" fill="#111" />
      <path d="M154 200 C164 206 174 210 184 214" stroke="#141414" strokeWidth="2.500" fill="none" />
      <path d="M172 397 L173 439" stroke="#23236e" strokeWidth="1.500" />
      <path d="M20 458 V448" stroke="#1fc82a" strokeWidth="1.500" />
      <path d="M15 456 L20 458" stroke="#c01818" strokeWidth="1.500" />
      <path d="M20 459 L30 457" stroke="#1a1ad0" strokeWidth="1.500" />
    </svg>
  );
}

function CameraScene() {
  return (
    <svg viewBox="0 0 362 481" preserveAspectRatio="xMaxYMin slice" className="absolute inset-0 h-full w-full bg-[#626262]">
      <defs>
        <radialGradient id="leaf" cx=".45" cy=".4" r=".6">
          <stop offset="0" stopColor="#585858" />
          <stop offset=".5" stopColor="#636363" />
          <stop offset="1" stopColor="#686868" />
        </radialGradient>
        <filter id="soft" x="-50%" y="-100%" width="200%" height="300%">
          <feGaussianBlur stdDeviation="9" />
        </filter>
      </defs>
      <rect width="362" height="84" fill="#7f7f7f" />
      <rect y="84" width="362" height="144" fill="#969696" />
      <rect y="228" width="362" height="168" fill="#383838" />
      <g transform="translate(153 -37) scale(.332 .338)">
        <path d="M20 495 C70 510 100 545 150 562 C185 570 210 568 230 573 C215 585 170 582 110 575 C80 560 50 545 20 550 Z" fill="#343434" />
        <path d="M0 550 H48 C46 600 56 640 54 690 L30 705 H0 Z" fill="#454545" />
        <path d="M110 1034 H270 M110 1056 H338 M20 1139 H365 M20 1223 H388" stroke="#7d7d7d" strokeWidth="3" />
        <path d="M118 1012 H230 M118 1069 H345 M30 1129 H365 M30 1181 H385" stroke="#858585" strokeWidth="9" strokeDasharray="3 21" />
        <path d="M118 1101 H352" stroke="#050505" strokeWidth="4" />
        <path d="M20 890 L64 944 L80 926 L110 965 C106 1010 112 1070 120 1105 C100 1122 70 1122 50 1116 L20 1010 Z" fill="#4d4d4d" />
        <path d="M30 990 C50 1020 48 1080 54 1115 M64 944 C84 1000 86 1060 84 1115" stroke="#333" strokeWidth="5" fill="none" />
        <path d="M360 652 L372 672 L412 702 L440 718 M462 734 L492 741 M132 648 L103 662 L85 678 M510 916 L496 936 L460 952 L450 974 L416 990" stroke="#222" strokeWidth="4" fill="none" />
        <path
          d="M0 700 L50 688 L85 680 L105 662 L132 648 C150 625 170 605 245 598 C290 602 310 614 330 626 C350 642 362 655 370 672 L408 696 C430 715 450 720 478 736 C510 742 540 758 556 780 C572 800 579 815 578 850 C570 880 560 895 544 905 L512 914 L498 940 L462 956 L450 978 L418 992 L410 1018 C380 1040 330 1046 290 1044 C250 1042 200 1030 170 1008 C145 990 140 970 115 958 L64 924 L35 906 L0 880 Z"
          fill="url(#leaf)"
        />
        <ellipse cx="262" cy="776" rx="66" ry="10" fill="#454545" filter="url(#soft)" />
        <path d="M268 768 L292 810 C286 836 246 836 238 815 Z" fill="#747474" filter="url(#soft)" />
        <path d="M268 764 L280 786 L258 784 Z" fill="#6c6c6c" />
        <circle cx="82" cy="1128" r="4" fill="#000" />
        <circle cx="82" cy="1181" r="4" fill="#000" />
      </g>
      <path d="M0 84 H362 M0 396 H362" stroke="#04401c" strokeWidth="1.500" />
    </svg>
  );
}

/* ---------- render settings window ---------- */

function WindowButton({ kind, close }: { kind: string; close?: boolean }) {
  return (
    <button
      type="button"
      aria-label={kind}
      className={clsx(
        "flex h-[13px] w-[25px] items-center justify-center rounded-[2px] border",
        close ? "border-[#6b2a25] bg-linear-to-b from-[#d99a90] via-[#bf4a3c] to-[#c86a58]" : "border-[#7d93a6] bg-linear-to-b from-[#d3e0ea] to-[#adc3d5]",
      )}
    >
      <svg viewBox="0 0 12 8" className="h-2 w-3" aria-hidden>
        {kind === "Minimize" && <rect x="2" y="4" width="8" height="3" fill="#fff" stroke="#445566" strokeWidth=".8" />}
        {kind === "Maximize" && (
          <>
            <rect x="2.500" y=".5" width="7" height="7" fill="#fff" stroke="#445566" />
            <rect x="5" y="3" width="2" height="2" fill="none" stroke="#445566" />
          </>
        )}
        {kind === "Restore" && <path d="M5 1 H10 V5 H5 Z M2 3 H7 V7 H2 Z" fill="#fff" stroke="#445566" />}
        {kind === "Close" && (
          <>
            <path d="M3 1 L9 7 M9 1 L3 7" stroke="#445" strokeWidth="3" />
            <path d="M3 1 L9 7 M9 1 L3 7" stroke="#fff" strokeWidth="1.500" />
          </>
        )}
      </svg>
    </button>
  );
}

function RenderSettings() {
  return (
    <div className="absolute top-[84px] left-[217px] flex h-[529px] w-[493px] flex-col rounded-t-md border border-[#12343f] bg-[#b9d3ea] px-[6px] pb-[6px]">
      <header className="flex h-[21px] shrink-0 items-center gap-1 rounded-t-md bg-linear-to-b from-[#8fadcb] to-[#a9c4dd] pt-1 font-['Open_Sans',sans-serif] text-[#1d2c3a]">
        <Icon name="logo" className="size-[13px]" />
        <h2 className="flex-1">Render Settings</h2>
        <div className="flex gap-[2px]">
          <WindowButton kind="Minimize" />
          <WindowButton kind="Maximize" />
          <WindowButton kind="Close" close />
        </div>
      </header>
      <nav className={clsx("flex h-4 shrink-0 items-center gap-2 bg-linear-to-b from-white to-[#d3dcee] px-[5px]", menuFont)}>
        <a href="#">Edit</a>
        <a href="#">Presets</a>
        <a href="#">Help</a>
      </nav>

      <div className="flex min-h-0 flex-1 flex-col bg-[#ececec]">
        <div className="mt-px flex shrink-0 flex-col gap-1 border border-[#b4b4b4] py-[3px] pl-[2px]">
          <div className="flex items-center">
            <label htmlFor="layer" className="w-20">Render Layer</label>
            <Combo id="layer" value="masterLayer" className="w-[69px]" />
          </div>
          <div className="flex items-center">
            <label htmlFor="using" className="w-20">Render Using</label>
            <Combo id="using" value="Maya Software" className="w-[83px]" />
          </div>
        </div>

        <div className="mt-[3px] flex h-[18px] shrink-0" role="tablist">
          <button type="button" role="tab" className="border-r border-[#666] px-[5px] pb-[2px]">Common</button>
          <button type="button" role="tab" className="mt-[2px] border-r border-[#666] px-1">Maya Software</button>
        </div>

        <div className="shrink-0 px-[9px] pt-[3px] pb-[3px] text-[10px]/[13px] font-bold">
          <p>Path: E:/tutor/TUTOR_MAYA/images/</p>
          <p className="flex gap-[7px]"><span>File name:</span><span>C2/tree.0001.png</span></p>
          <p className="flex"><span className="w-[57px]">To:</span><span>C2/tree.1500.png</span></p>
          <p>Image size: 1280 x 720 (17.8 x 10 inches 72 pixels/inch )</p>
        </div>

        <div className="mx-[3px] flex min-h-0 flex-1 overflow-hidden border-2 border-t-[#777] border-r-[#999] border-b-[#999] border-l-[#777]">
          <div className="w-[331px] shrink-0 border-r border-[#aaa]">
            <div className="-mt-1 border-b border-[#aaa] text-[#777]">
              <Row id="byframe" label="By frame:">
                <NumberField id="byframe" value="1.000" disabled />
              </Row>
            </div>
            <SectionHeader title="Renderable Cameras" />
            <div className="mb-[2px] border-b border-[#999] pb-[2px]">
              <CameraBlock id="cam1" name="C1" />
            </div>
            <CameraBlock id="cam2" name="C2" />
            <div className="border-t border-[#aaa]">
              <SectionHeader title="Image Size" />
            </div>
            <div className="border-b border-[#999] pb-[3px]">
              <Row id="presets" label="Presets:">
                <Combo id="presets" value="HD 720" highlight className="w-[118px]" />
              </Row>
            </div>
            <div className="border-b border-[#999] pb-[2px]">
              <div className="pl-[118px]">
                <Check label="Maintain width/height ratio" />
              </div>
              <div className="flex h-[13px] items-center gap-[5px]">
                <span className="w-[113px] text-right">Maintain ratio:</span>
                <Radio name="ratio" label="Pixel aspect" checked className="w-[107px]" />
                <Radio name="ratio" label="Device aspect" />
              </div>
              <Row id="width" label="Width:"><NumberField id="width" value="1280" /></Row>
              <Row id="height" label="Height:"><NumberField id="height" value="720" /></Row>
              <Row id="units" label="Size units:"><Combo id="units" value="pixels" className="w-12" /></Row>
              <div className="mt-1 flex flex-col gap-px">
                <Row id="res" label="Resolution:"><NumberField id="res" value="72.000" /></Row>
                <Row id="resunits" label="Resolution units:"><Combo id="resunits" value="pixels/inch" className="w-16" /></Row>
              </div>
            </div>
            <div className="pt-px">
              <Row id="dar" label="Device aspect ratio:"><NumberField id="dar" value="1.777" /></Row>
              <Row id="par" label="Pixel aspect ratio:"><NumberField id="par" value="1.000" /></Row>
            </div>
          </div>

          {/* scroll bar */}
          <div className="ml-auto flex w-[13px] flex-col bg-[#e4e4e4]">
            <button type="button" aria-label="Scroll up" className="mt-px flex h-[13px] items-center justify-center border border-[#aaa] bg-[#f2f2f2]">
              <Icon name="up" className="size-[10px]" />
            </button>
            <div className="relative mt-[141px] flex h-[141px] items-center justify-center rounded-[2px] border border-[#3a7591] bg-linear-to-r from-[#bfe6f6] via-[#8fd2ee] to-[#49a6cf]">
              <span className="flex flex-col gap-px">
                <span className="h-px w-[6px] bg-[#1d4a66]" />
                <span className="h-px w-[6px] bg-[#1d4a66]" />
                <span className="h-px w-[6px] bg-[#1d4a66]" />
              </span>
              <svg viewBox="0 0 10 16" className="absolute top-[30px] left-1 h-4 w-[10px]" aria-hidden>
                <path d="M.5 .5 V13 L3.500 10.500 L5.500 15 L7.500 14 L5.700 9.800 H9.500 Z" fill="#fff" stroke="#2c4a66" />
              </svg>
            </div>
            <button type="button" aria-label="Scroll down" className="mt-auto flex h-[13px] items-center justify-center border border-[#aaa] bg-[#f2f2f2]">
              <Icon name="down" className="size-2" />
            </button>
          </div>
        </div>

        <div className="mt-px shrink-0 border-t-2 border-[#999] px-[3px] pt-1 pb-[3px]">
          <button type="button" className="h-[21px] w-full border-t border-r-2 border-b-2 border-t-white border-r-[#777] border-b-[#777]">
            Close
          </button>
        </div>
      </div>
    </div>
  );
}

/* ---------- right side panel ---------- */

function SidePanel() {
  return (
    <aside className="flex w-[240px] shrink-0 flex-col bg-[#ececec]">
      <div className="mt-[2px] ml-[6px] h-1 border-t-2 border-dotted border-[#aaa]" />
      <div className="flex h-[21px] shrink-0 items-center">
        <ToolButton name="listRows" className="w-[18px]" />
        <ToolButton name="layersRows" className="w-[18px]" />
        <ToolButton name="channelBox" className="w-[18px]" pressed />
        <div className="ml-auto flex">
          <ToolButton name="axes" className="w-[18px] border-r-[#aaa] bg-white" />
          <ToolButton name="halfMoon" className="w-[18px] border-r-[#aaa]" />
          <ToolButton name="arrowUpRight" className="w-[18px]" />
        </div>
      </div>
      <nav className={clsx("flex h-[17px] shrink-0 items-center gap-[6px] border-t border-l-2 border-[#888] px-[3px]", menuFont)}>
        <a href="#">Channels</a>
        <a href="#">Edit</a>
        <a href="#">Object</a>
        <a href="#">Show</a>
      </nav>
      <div className="mr-px flex-1 border-2 border-[#888] border-r-[#ccc] border-b-[#ccc]" />

      <div className="mt-1 border-t-2 border-l-2 border-[#888]">
        <div className="flex h-4 items-center gap-[9px] pl-[2px]">
          <Radio name="layermode" label="Display" checked />
          <Radio name="layermode" label="Render" />
          <Radio name="layermode" label="Anim" />
        </div>
        <nav className={clsx("flex h-4 items-center gap-[6px] border-b border-[#888] px-[3px] pb-px", menuFont)}>
          <a href="#">Layers</a>
          <a href="#">Options</a>
          <a href="#">Help</a>
        </nav>
        <div className="flex h-[23px] items-center justify-end gap-[2px] pr-[2px]">
          <ToolButton name="layerUp" className="border-r-[#aaa]" />
          <ToolButton name="layerDown" className="border-r-[#aaa]" />
          <ToolButton name="layerNew" className="border-r-[#aaa]" />
          <ToolButton name="layerNewSel" className="border-r-[#aaa]" />
        </div>
      </div>
      <div className="mr-[3px] flex h-[109px] shrink-0 border-2 border-[#777]">
        <ul className="flex-1 pt-px">
          <li className="flex h-[15px] items-center gap-1 bg-[#2a78b8] px-[2px] text-white">
            <span className="size-3 border border-[#8fc0e6]" />
            <span className="size-3 border border-[#8fc0e6]" />
            <span className="flex items-center gap-[2px]">
              <svg viewBox="0 0 12 12" className="size-3" aria-hidden>
                <path d="M.5 .5 H11.500 V11.500 H.5 Z M0 12 L12 0" fill="none" stroke="#d8ecfa" />
              </svg>
              layer1
            </span>
          </li>
        </ul>
        <div className="flex w-[14px] flex-col items-center justify-between bg-[#f1f1f1] py-[3px]">
          <Icon name="up" className="size-2" />
          <Icon name="down" className="size-2" />
        </div>
      </div>
      <div className={clsx("mt-px flex h-[13px] shrink-0", menuFont)}>
        <button type="button" className="flex-1 border-r border-b border-[#666] leading-none">&lt;&lt;</button>
        <button type="button" className="flex-1 border-r border-b border-[#666] leading-none">&gt;&gt;</button>
      </div>
    </aside>
  );
}

/* ---------- page ---------- */

export default function App() {
  return (
    <div className="min-h-screen bg-black px-16 font-['Liberation_Sans',sans-serif] text-[9px]/[12px] text-black">
      <div className="relative flex h-screen min-h-[720px] flex-col bg-[#ececec]">
        <header className="flex h-[18px] shrink-0 items-center gap-[6px] border-t border-[#3c4a55] bg-linear-to-b from-[#a8becd] to-[#bfd2df] px-[2px] font-['Open_Sans',sans-serif] text-[#33414d]">
          <Icon name="logo" className="size-[13px]" />
          <h1 className="flex-1">Autodesk Maya 2009 Unlimited: E:\tutor\tree002-final.mb</h1>
          <div className="flex gap-[2px]">
            <WindowButton kind="Minimize" />
            <WindowButton kind="Restore" />
            <WindowButton kind="Close" />
          </div>
        </header>
        <nav className={clsx("flex h-[15px] shrink-0 items-center gap-2 bg-linear-to-b from-white to-[#d2daea] px-[6px] text-[#707780]", menuFont)}>
          {mainMenu.map((item) => (
            <a key={item} href="#">{item}</a>
          ))}
        </nav>

        {/* status line */}
        <div className="flex h-6 shrink-0 items-center">
          <Handle />
          <Combo id="menuset" label="Menu set" value="Rendering" className="ml-px w-[71px]" />
          <Divider />
          {["newScene", "open", "save"].map((name) => <ToolButton key={name} name={name} />)}
          <Divider />
          <ToolButton name="filter" className="w-4" />
          <input aria-label="Selection mask" defaultValue="Objects" className={clsx("h-[17px] w-[73px] border-t-2 bg-[#ececec] pl-px outline-none", inset)} />
          <Divider />
          <ToolButton name="hierarchy" />
          <ToolButton name="object" pressed />
          <ToolButton name="component" />
          <Divider />
          <ToolButton name="filter" className="w-4" />
          {masks.map((name) => <ToolButton key={name} name={name} pressed />)}
          <ToolButton name="lock" />
          <ToolButton name="highlight" />
          <Divider />
          {snaps.map((name) => <ToolButton key={name} name={name} />)}
          <Divider />
          <ToolButton name="input" />
          <ToolButton name="output" />
          <ToolButton name="history" pressed />
          <Divider />
          {["renderView", "clapper", "ipr", "renderSettings"].map((name) => <ToolButton key={name} name={name} className="w-[22px]" />)}
          <Divider />
          <div className="ml-auto flex">
            <ToolButton name="attr" />
            <ToolButton name="toolSettings" />
            <ToolButton name="channelBox" />
          </div>
        </div>

        {/* shelf */}
        <div className="flex h-[51px] shrink-0">
          <Handle />
          <div className="flex w-[23px] flex-col justify-end pb-px">
            <button type="button" aria-label="Shelf tabs" className="flex h-3 items-center justify-center border border-[#ccc] bg-[#f4f4f4]">
              <span className="h-[6px] w-3 border-r-2 border-b border-[#888]" />
            </button>
            <button type="button" aria-label="Shelf menu" className="flex h-4 items-center justify-center border border-[#ccc] bg-[#f4f4f4]">
              <Icon name="down" className="size-3" />
            </button>
          </div>
          <div className="flex min-w-0 flex-1 flex-col">
            <div className="flex h-[18px] items-center pt-[2px]" role="tablist">
              {shelfTabs.map((tab) => (
                <button
                  key={tab}
                  type="button"
                  role="tab"
                  className={clsx("h-[13px] min-w-[38px] border-r border-[#666] px-[3px] text-left", tab === "Rendering" && "mb-[2px]")}
                >
                  {tab}
                </button>
              ))}
              <button type="button" aria-label="Delete" className="mr-[2px] ml-auto flex pb-1">
                <Icon name="trash" className="size-[14px]" />
              </button>
            </div>
            <div className="mr-1 flex min-h-0 flex-1 items-center gap-px border-2 border-[#777] border-b-[#999] px-px">
              {lights.map((name) => (
                <button key={name} type="button" aria-label={name} className="flex size-[26px] shrink-0 items-center justify-center bg-[#bebebe]">
                  <Icon name={name} className="size-5" />
                </button>
              ))}
              <span className="size-[26px] shrink-0 border-2 border-black bg-[#3b78c8]" />
              {shelfBalls.map((color, i) => (
                <span key={i} className="flex size-[26px] shrink-0 items-center justify-center bg-[#bebebe]">
                  <svg viewBox="0 0 20 20" className="size-6" aria-hidden>
                    <circle cx="10" cy="10" r="9" fill={color} />
                  </svg>
                </span>
              ))}
              {[0, 1, 2, 3, 4, 5].map((i) => (
                <span key={i} className="size-[26px] shrink-0 border-2 border-black bg-[#3b78c8]" />
              ))}
              <button type="button" aria-label="Paint" className="ml-1.5 flex size-[26px] shrink-0 items-center justify-center bg-[#bebebe]">
                <Icon name="brush" className="size-[26px]" />
              </button>
              <span className="mr-px ml-auto flex w-4 flex-col items-center gap-1 border-l border-[#ccc]">
                <Icon name="up" className="size-2" />
                <Icon name="down" className="size-2" />
              </span>
            </div>
          </div>
        </div>

        {/* workspace */}
        <div className="flex min-h-0 flex-1 border-t-2 border-[#ddd]">
          <div className="flex w-8 shrink-0 flex-col items-center border-r border-[#ccc]">
            <div className="mt-[2px] mb-1 h-1 w-6 border-t-2 border-dotted border-[#aaa]" />
            <div className="flex flex-col gap-px">
              {toolbox.map((name) => (
                <button
                  key={name}
                  type="button"
                  aria-label={name}
                  className={clsx("flex size-[26px] items-center justify-center bg-[#bfc0bd]", name === "select" && "border-2 border-[#14145c]")}
                >
                  <Icon name={name} className={name === "select" ? "size-[22px]" : "size-6"} />
                </button>
              ))}
            </div>
            <div className="mt-8 flex flex-col gap-px border-t border-[#ccc] pt-[3px]">
              {layouts.map((name) => (
                <button key={name} type="button" aria-label={name} className="flex size-[26px] items-center justify-center border border-[#777] bg-[#c4c5c1]">
                  <Icon name={name} className="size-6" />
                </button>
              ))}
              <div className="grid grid-cols-2">
                {[0, 1, 2, 3].map((i) => (
                  <button key={i} type="button" aria-label="Panel" className="flex h-[13px] items-center justify-center border-r border-b border-[#aaa] bg-[#f2f2f2]">
                    <Icon name="down" className="size-2" />
                  </button>
                ))}
              </div>
            </div>
            <Icon name="logo" className="mt-auto mb-[3px] size-[26px]" />
          </div>

          <div className="flex min-w-0 flex-1 gap-px pb-[7px]">
            <Viewport className="flex-[511]">
              <PerspScene />
              <b className="absolute bottom-[22px] left-3 font-['Open_Sans',sans-serif] text-[11px] text-[#d01818]">x</b>
              <b className="absolute bottom-[33px] left-4 font-['Open_Sans',sans-serif] text-[11px] text-[#1fc82a]">y</b>
              <b className="absolute bottom-[22px] left-[29px] font-['Open_Sans',sans-serif] text-[11px] text-[#1212c8]">z</b>
              <span className="absolute bottom-1 left-[236px] font-['Open_Sans',sans-serif] font-bold text-[#04401c]">persp</span>
            </Viewport>
            <Viewport end className="flex-[365]">
              <CameraScene />
              <span className="absolute top-[3px] right-[159px] font-['Open_Sans',sans-serif] font-bold text-[#04401c]">1280 x 720</span>
              <span className="absolute right-[180px] bottom-1 font-['Open_Sans',sans-serif] font-bold text-[#04401c]">C1</span>
            </Viewport>
          </div>

          <SidePanel />
        </div>

        {/* time slider */}
        <div className="flex h-[26px] shrink-0">
          <Handle />
          <div className="relative flex min-w-0 flex-1 overflow-hidden border-t-2 border-l-2 border-[#888] pr-[7px] font-['Open_Sans',sans-serif] text-[10px]/[11px] font-bold">
            {ticks.map((t) => (
              <div key={t} className="flex flex-1 flex-col items-start">
                <span className="h-3 w-0 overflow-visible pl-px">{t}</span>
                <span className="h-[10px] w-[2px] bg-black" />
              </div>
            ))}
            <div className="flex w-0 flex-col items-start">
              <span className="h-3">300</span>
              <span className="h-[10px] w-[2px] bg-black" />
            </div>
            <span className="absolute right-0 bottom-0">300</span>
          </div>
          <div className="flex w-[240px] shrink-0 items-center pl-[5px]">
            <input aria-label="Current time" defaultValue="300.00" className={clsx("mr-1 h-[15px] w-[53px] bg-white pl-px", inset)} />
            {playback.map((name) => (
              <button key={name} type="button" aria-label={name} className="flex h-5 flex-1 items-center justify-center border-r border-b border-[#bbb]">
                <Icon name={name} />
              </button>
            ))}
          </div>
        </div>

        {/* range slider */}
        <div className="flex h-5 shrink-0 items-center gap-[2px]">
          <Handle />
          <input aria-label="Start time" defaultValue="1.00" className={clsx("h-[17px] w-[53px] bg-white pl-px", inset)} />
          <input aria-label="Range start" defaultValue="1.00" className={clsx("h-[17px] w-[53px] bg-white pl-px", inset)} />
          <div className="flex h-[18px] min-w-0 flex-1 items-center justify-between border-t-2 border-r-4 border-l-4 border-[#aaa] px-[5px]">
            <span className="size-[9px] border-r border-b border-[#888]" />
            <span className="size-[9px] border-r border-b border-[#888]" />
          </div>
          <input aria-label="Range end" defaultValue="300.00" className={clsx("h-[17px] w-[53px] bg-white pl-px", inset)} />
          <input aria-label="End time" defaultValue="300.00" className={clsx("h-[17px] w-[53px] bg-white pl-px", inset)} />
          <button type="button" aria-label="Anim layer menu" className="flex h-[17px] w-[18px] items-center justify-center border-r border-b border-[#ccc]">
            <Icon name="down" />
          </button>
          <span className={clsx("flex h-[17px] w-[79px] items-center pl-px whitespace-nowrap", inset)}>No Anim Layer</span>
          <button type="button" aria-label="Character set menu" className="flex h-[17px] w-[18px] items-center justify-center border-r border-b border-[#ccc]">
            <Icon name="down" />
          </button>
          <span className={clsx("flex h-[17px] w-[79px] items-center pl-px whitespace-nowrap", inset)}>No Character Set</span>
          <button type="button" aria-label="Auto key" className="mr-1 ml-[3px] flex h-[13px] w-[19px] items-center justify-center bg-[#a81016]">
            <Icon name="key" />
          </button>
          <Icon name="prefs" className="mr-px size-[14px]" />
        </div>

        {/* command line */}
        <div className="flex h-5 shrink-0 items-center">
          <Handle />
          <label htmlFor="mel" className={clsx("w-10 text-center font-bold", menuFont)}>MEL</label>
          <input id="mel" className={clsx("h-[17px] flex-1 border-t-2 bg-white", inset)} />
          <div className="ml-1 h-[17px] flex-1 border-t border-l border-[#666] bg-[#87939a]" />
          <Icon name="script" className="mr-[2px] ml-1 size-[14px]" />
        </div>
        <div className="ml-2 h-[19px] shrink-0 border-t-2 border-[#aaa]" />

        <RenderSettings />
        <p className="absolute bottom-0 left-0 h-[15px] w-[115px] bg-black px-2 font-['Liberation_Mono',monospace] text-[10px]/[15px] text-[#14c81e]">0:58:23 9/3/2554</p>
      </div>
    </div>
  );
}
